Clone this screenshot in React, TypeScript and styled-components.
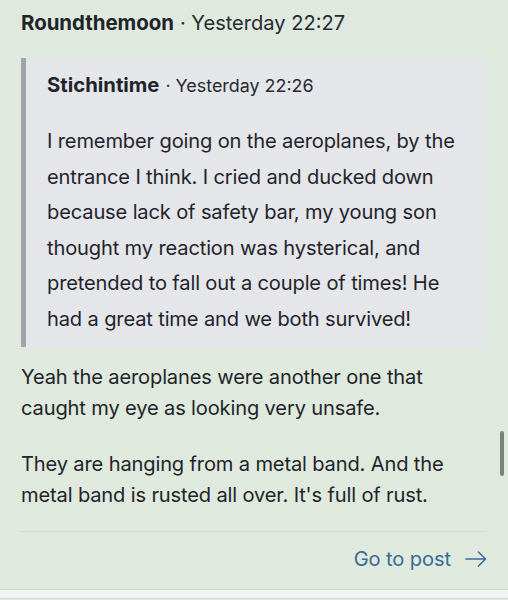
import React from "react";
import styled, { createGlobalStyle } from "styled-components";

const Global = createGlobalStyle`
  html, body {
    margin: 0;
    padding: 0;
    background: #dfe9dd;
  }
  body {
    font-family: "Inter", "Noto Sans", sans-serif;
    color: #1f242a;
    -webkit-font-smoothing: antialiased;
  }
`;

const Page = styled.div`
  position: relative;
  width: 508px;
  height: 600px;
  overflow: hidden;
  background: #dfe9dd;
`;

const Card = styled.article`
  display: flex;
  flex-direction: column;
  padding: 8px 21px 15px 21px;
  border-bottom: 1px solid #cfd8ce;
`;

const Meta = styled.div`
  display: flex;
  align-items: baseline;
  gap: 6px;
  line-height: 30px;
`;

const Author = styled.span<{ $small?: boolean }>`
  font-size: ${(p) => (p.$small ? "20.3px" : "20.4px")};
  font-weight: 700;
  color: #1f242a;
`;

const Time = styled.span<{ $small?: boolean }>`
  font-size: ${(p) => (p.$small ? "17.9px" : "20.1px")};
  color: #262b31;
  font-weight: 400;
`;

const Quote = styled.blockquote`
  margin: 20px 0 0 0;
  padding: 12px 18px 9px 21px;
  background: #e4e6ea;
  border-left: 5px solid #a0a5ab;
  display: flex;
  flex-direction: column;
  gap: 23px;
`;

const QuoteText = styled.p`
  margin: 0;
  font-size: 20.1px;
  line-height: 35.6px;
  letter-spacing: -0.15px;
  color: #1f242a;
`;

const Body = styled.div`
  margin-top: 15px;
  display: flex;
  flex-direction: column;
  gap: 25px;
`;

const Para = styled.p`
  margin: 0;
  font-size: 20.1px;
  line-height: 31px;
  letter-spacing: -0.15px;
  color: #1f242a;
`;

const Divider = styled.hr`
  margin: 20px 0 0 0;
  border: 0;
  height: 1px;
  background: #d2dcd0;
`;

const Footer = styled.div`
  display: flex;
  justify-content: flex-end;
  margin-top: 12px;
`;

const GoLink = styled.a`
  display: inline-flex;
  align-items: center;
  gap: 14px;
  font-size: 20.1px;
  line-height: 30px;
  color: #3b6a97;
  text-decoration: none;
  letter-spacing: -0.1px;
`;

const Band = styled.div`
  height: 8px;
  background: #f1f3f3;
  border-bottom: 1px solid #d5ddd4;
`;

const Scrollbar = styled.div`
  position: absolute;
  right: 4px;
  top: 431px;
  width: 4px;
  height: 45px;
  border-radius: 2px;
  background: #7c837c;
`;

const Arrow = () => (
  <svg width="22" height="16" viewBox="0 0 22 16" fill="none">
    <path
      d="M1 8H20.5M13.5 1L20.5 8L13.5 15"
      stroke="#3b6a97"
      strokeWidth="1.6"
      strokeLinecap="round"
      strokeLinejoin="round"
    />
  </svg>
);

export default function App() {
  return (
    <>
      <Global />
      <Page>
        <Card>
          <Meta>
            <Author>Roundthemoon</Author>
            <Time>· Yesterday 22:27</Time>
          </Meta>
          <Quote>
            <Meta>
              <Author $small>Stichintime</Author>
              <Time $small>· Yesterday 22:26</Time>
            </Meta>
            <QuoteText>
              I remember going on the aeroplanes, by the entrance I think. I
              cried and ducked down because lack of safety bar, my young son
              thought my reaction was hysterical, and pretended to fall out a
              couple of times! He had a great time and we both survived!
            </QuoteText>
          </Quote>
          <Body>
            <Para>
              Yeah the aeroplanes were another one that caught my eye as
              looking very unsafe.
            </Para>
            <Para>
              They are hanging from a metal band. And the metal band is rusted
              all over. It's full of rust.
            </Para>
          </Body>
          <Divider />
          <Footer>
            <GoLink href="#">
              Go to post
              <Arrow />
            </GoLink>
          </Footer>
        </Card>
        <Band />
        <Scrollbar />
      </Page>
    </>
  );
}
